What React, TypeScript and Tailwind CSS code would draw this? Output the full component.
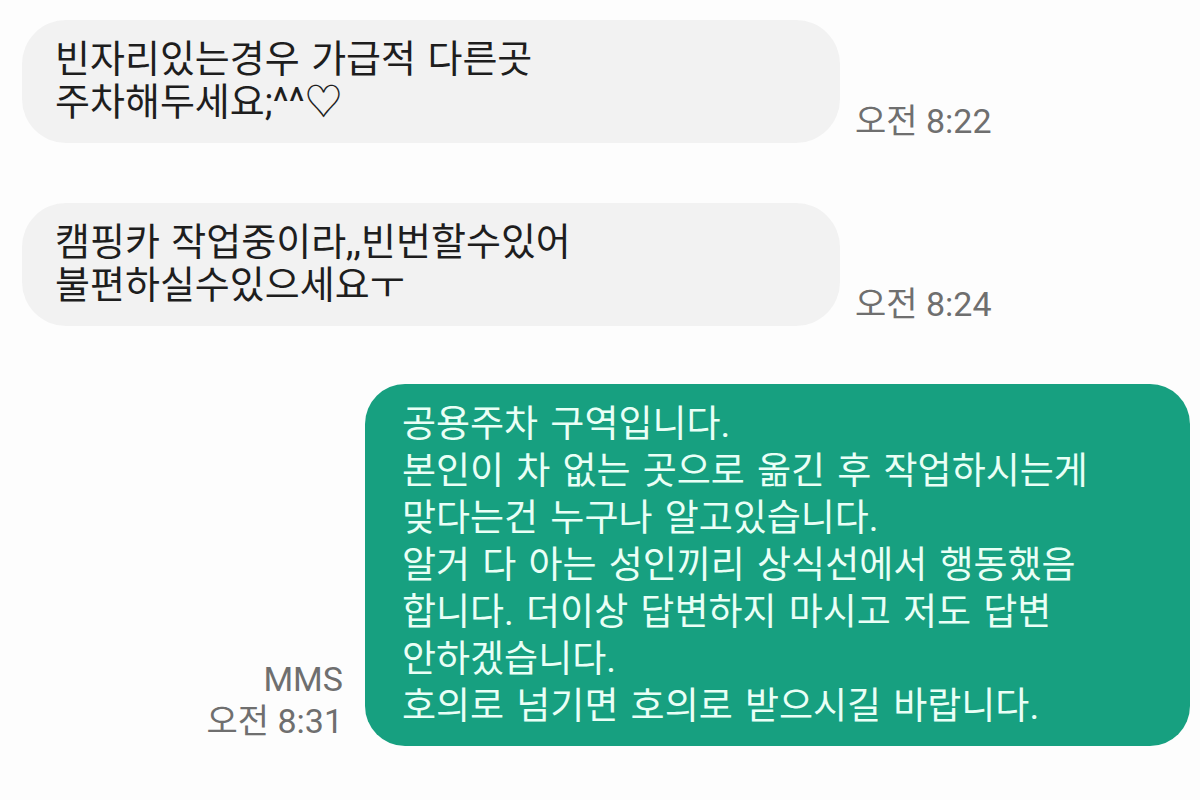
import React from "react";

const font = { fontFamily: 'Roboto, "Noto Sans CJK KR", sans-serif' };

function Received({ lines, time }: { lines: string[]; time: string }) {
  return (
    <div className="flex items-end">
      <div className="w-[818px] rounded-[44px] bg-[#f2f2f2] pl-[33px] pr-8 pt-[18px] pb-[19px] text-[38px] leading-[43px] text-[#1e1e1e] [word-spacing:2px]">
        {lines.map((l) => (
          <div key={l}>{l}</div>
        ))}
      </div>
      <div className="ml-[15px] mb-[2px] text-[34px] leading-[40px] text-[#6f6f6f]">{time}</div>
    </div>
  );
}

export default function App() {
  const sent = [
    "공용주차 구역입니다.",
    "본인이 차 없는 곳으로 옮긴 후 작업하시는게",
    "맞다는건 누구나 알고있습니다.",
    "알거 다 아는 성인끼리 상식선에서 행동했음",
    "합니다. 더이상 답변하지 마시고 저도 답변",
    "안하겠습니다.",
    "호의로 넘기면 호의로 받으시길 바랍니다.",
  ];

  return (
    <div className="min-h-[800px] w-[1200px] bg-[#fdfdfd] pl-[22px] pr-[10px] pt-5" style={font}>
      <div className="flex flex-col gap-[60px]">
        <Received lines={["빈자리있는경우 가급적 다른곳", "주차해두세요;^^♡"]} time="오전 8:22" />
        <Received lines={["캠핑카 작업중이라,,빈번할수있어", "불편하실수있으세요ㅜ"]} time="오전 8:24" />
      </div>

      <div className="mt-[58px] flex items-end justify-end">
        <div className="mr-[22px] mb-[4px] text-right text-[34px] leading-[42px] text-[#6f6f6f]">
          <div>MMS</div>
          <div>오전 8:31</div>
        </div>
        <div className="w-[825px] rounded-[40px] bg-[#17a080] pl-[37px] pr-6 pt-[17px] pb-[16px] text-[37px] leading-[47px] text-[#e9fff6] [word-spacing:3px]">
          {sent.map((l) => (
            <div key={l}>{l}</div>
          ))}
        </div>
      </div>
    </div>
  );
}
